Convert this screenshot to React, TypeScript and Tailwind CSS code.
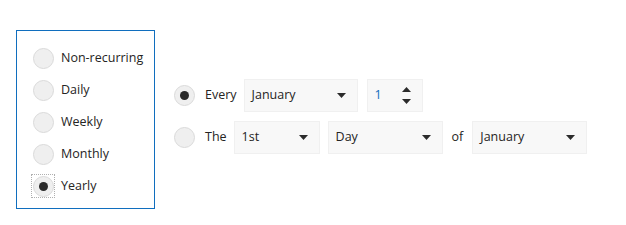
const font = { fontFamily: '"Open Sans", "Noto Sans", sans-serif' };

function Radio({ checked, focus }: { checked?: boolean; focus?: boolean }) {
  return (
    <span
      className={`flex h-[22px] w-[22px] items-center justify-center ${
        focus ? "outline outline-1 outline-dotted outline-[#b0b0b0]" : ""
      }`}
    >
      <span className="flex h-[21px] w-[21px] items-center justify-center rounded-full border border-[#dadada] bg-[#efefef]">
        {checked && <span className="h-[9px] w-[9px] rounded-full bg-[#2b2b2b]" />}
      </span>
    </span>
  );
}

function Caret() {
  return (
    <svg width="9" height="5" viewBox="0 0 9 5" className="shrink-0">
      <path d="M0 0h9L4.5 5z" fill="#2b2b2b" />
    </svg>
  );
}

function Select({ value, w }: { value: string; w: string }) {
  return (
    <div
      className={`flex h-[33px] ${w} items-center justify-between border border-[#f0f0f0] bg-[#f8f8f8] pl-[7px] pr-[11px] text-[12.5px] text-[#252423]`}
    >
      <span>{value}</span>
      <Caret />
    </div>
  );
}

function Spin() {
  return (
    <div className="flex h-[33px] w-[56px] items-center justify-between border border-[#f0f0f0] bg-[#f8f8f8] pl-[7px] pr-[11px] text-[12.5px] text-[#0f6cbd]">
      <span>1</span>
      <div className="flex flex-col gap-[7px]">
        <svg width="9" height="5" viewBox="0 0 9 5">
          <path d="M0 5h9L4.5 0z" fill="#2b2b2b" />
        </svg>
        <svg width="9" height="5" viewBox="0 0 9 5">
          <path d="M0 0h9L4.5 5z" fill="#2b2b2b" />
        </svg>
      </div>
    </div>
  );
}

export default function App() {
  const options = ["Non-recurring", "Daily", "Weekly", "Monthly", "Yearly"];
  return (
    <div className="flex h-[225px] w-[626px] items-start bg-white pl-[16px] pt-[30px]" style={font}>
      <div className="flex h-[179px] w-[139px] flex-col gap-[10px] border border-[#106ebe] pl-[15px] pt-[16px]">
        {options.map((o, i) => (
          <label key={o} className="flex h-[22px] items-center gap-[7px] text-[12.5px] text-[#252423]">
            <Radio checked={i === 4} focus={i === 4} />
            <span>{o}</span>
          </label>
        ))}
      </div>
      <div className="ml-[18px] mt-[49px] flex flex-col gap-[9px]">
        <div className="flex items-center">
          <Radio checked />
          <span className="ml-[10px] mr-[7px] text-[12.5px] text-[#252423]">Every</span>
          <Select value="January" w="w-[114px]" />
          <div className="ml-[9px]">
            <Spin />
          </div>
        </div>
        <div className="flex items-center">
          <Radio />
          <span className="ml-[10px] mr-[7px] text-[12.5px] text-[#252423]">The</span>
          <Select value="1st" w="w-[86px]" />
          <div className="ml-[8px]">
            <Select value="Day" w="w-[115px]" />
          </div>
          <span className="mx-[9px] text-[12.5px] text-[#252423]">of</span>
          <Select value="January" w="w-[115px]" />
        </div>
      </div>
    </div>
  );
}
